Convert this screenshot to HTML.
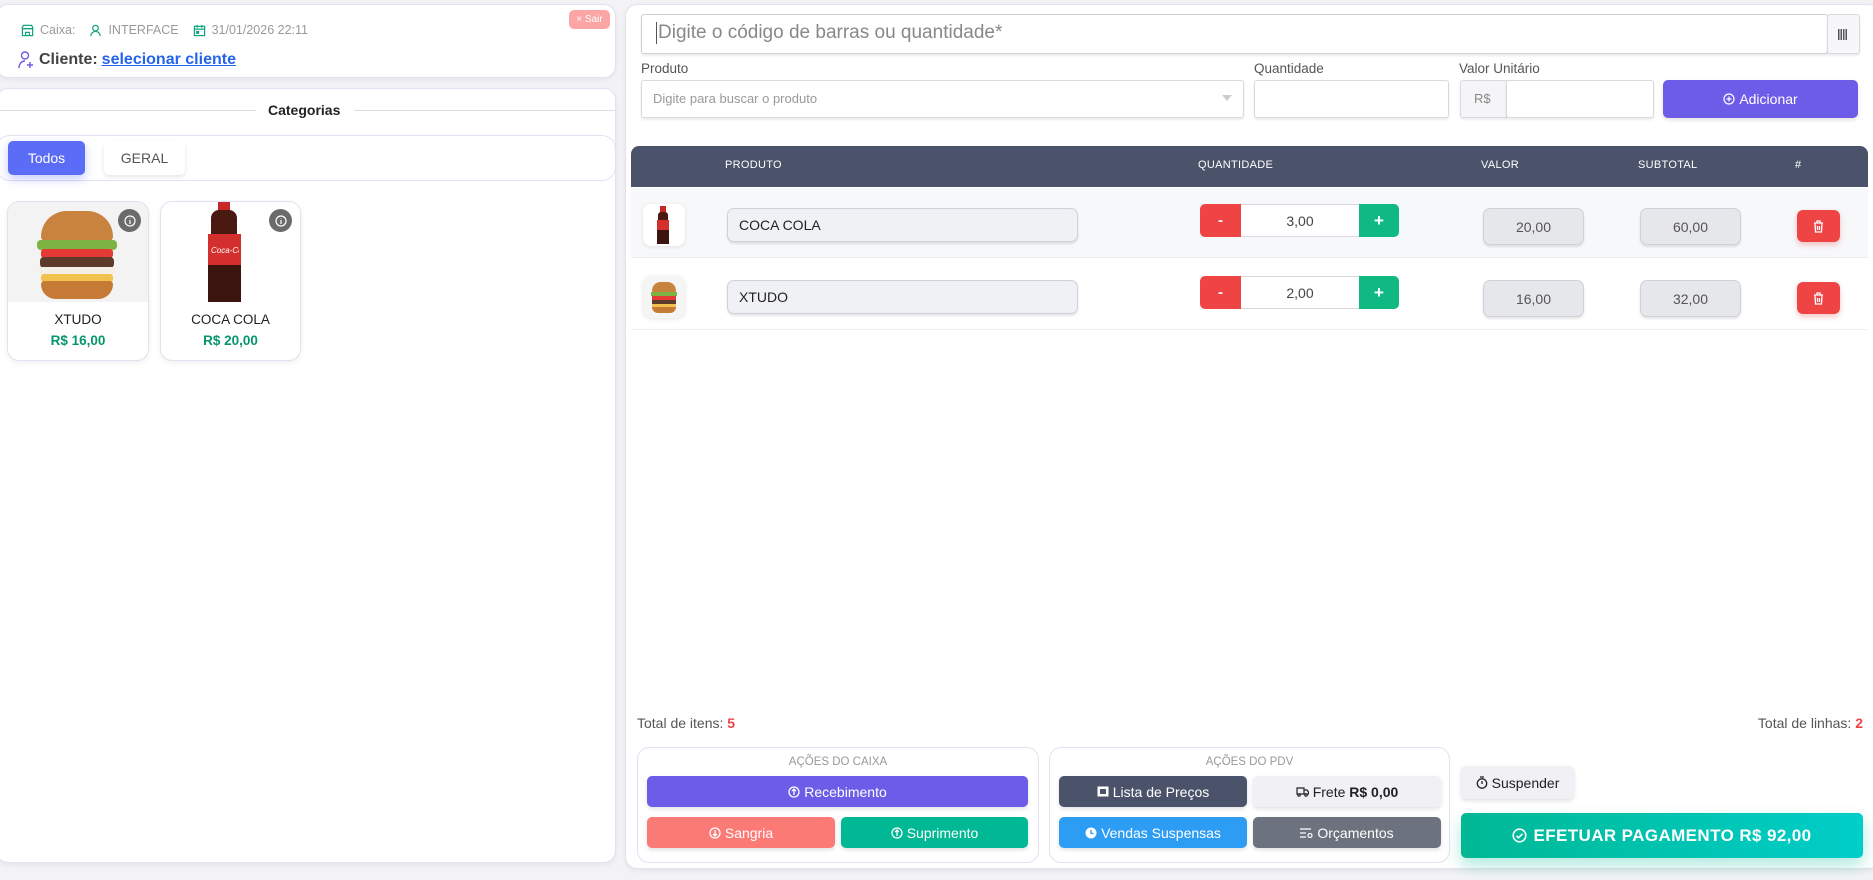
<!DOCTYPE html>
<html><head><meta charset="utf-8">
<style>
*{box-sizing:border-box;margin:0;padding:0}
body{width:1873px;height:880px;background:#f3f3f6;font-family:"Liberation Sans",sans-serif;position:relative;overflow:hidden;color:#333}
.a{position:absolute}
.card{position:absolute;background:#fff;border:1px solid #e2e1ef;border-radius:12px;box-shadow:0 2px 6px rgba(0,0,0,.06)}
.btn{position:absolute;border-radius:5px;display:flex;align-items:center;justify-content:center;font-size:14px;color:#fff;box-shadow:0 2px 4px rgba(0,0,0,.12)}
.inp{position:absolute;background:#fff;border:1px solid #d9d9df;border-radius:3px;box-shadow:0 2px 2px rgba(0,0,0,.08)}
.th{position:absolute;top:159px;font-size:11px;color:#fff;letter-spacing:.3px}
.pf{position:absolute;background:#f0f1f5;border:1px solid #cfd1d8;border-radius:7px;font-size:14px;color:#222;display:flex;align-items:center;padding-left:11px;box-shadow:0 2px 2px rgba(0,0,0,.1)}
.vf{position:absolute;background:#e6e7ea;border:1px solid #cfd1d8;border-radius:7px;font-size:14px;color:#555;display:flex;align-items:center;justify-content:center;box-shadow:0 2px 2px rgba(0,0,0,.1);width:101px;height:37px}
.qm{position:absolute;background:#ef4444;color:#fff;width:41px;height:33px;border-radius:5px 0 0 5px;display:flex;align-items:center;justify-content:center;font-size:15px;font-weight:bold}
.qp{position:absolute;background:#10b981;color:#fff;width:40px;height:33px;border-radius:0 5px 5px 0;display:flex;align-items:center;justify-content:center;font-size:17px;font-weight:bold}
.qv{position:absolute;background:#fff;width:118px;height:33px;border-top:1px solid #d8d8de;border-bottom:1px solid #d8d8de;display:flex;align-items:center;justify-content:center;font-size:14px;color:#444}
.del{position:absolute;background:#ef4444;border-radius:6px;width:43px;height:32px;box-shadow:0 3px 6px rgba(239,68,68,.3);display:flex;align-items:center;justify-content:center}
</style></head><body>

<!-- top-left card -->
<div class="card" style="left:-4px;top:4px;width:620px;height:74px"></div>
<div class="a" style="left:569px;top:10px;width:41px;height:19px;background:#fca5a5;border-radius:5px;color:#fff;font-size:10px;display:flex;align-items:center;justify-content:center">× Sair</div>
<div class="a" style="left:21px;top:23px;font-size:12.5px;color:#999;display:flex;align-items:center;gap:6px;white-space:nowrap">
<svg width="13" height="13" viewBox="0 0 14 14" fill="none" stroke="#10a37f" stroke-width="1.3"><rect x="1.5" y="5" width="11" height="7.5"/><path d="M1 5l1.5-3.5h9L13 5M1 5h12M5 12.5V9h4v3.5"/></svg><span>Caixa:</span>
<svg style="margin-left:8px" width="13" height="13" viewBox="0 0 14 14" fill="none" stroke="#10a37f" stroke-width="1.3"><circle cx="7" cy="4.5" r="3"/><path d="M2 13c0-3 2.5-5 5-5s5 2 5 5"/></svg><span>INTERFACE</span>
<svg style="margin-left:8px" width="13" height="13" viewBox="0 0 14 14" fill="none" stroke="#10a37f" stroke-width="1.3"><rect x="1.5" y="2.5" width="11" height="10"/><path d="M1.5 5.5h11M4.5 1v3M9.5 1v3"/><rect x="4" y="8" width="2" height="2" fill="#10a37f"/></svg><span>31/01/2026 22:11</span></div>
<div class="a" style="left:18px;top:51px;font-size:16px;color:#333;display:flex;align-items:center;gap:4px;white-space:nowrap">
<svg width="17" height="18" viewBox="0 0 17 18" fill="none" stroke="#6b5be6" stroke-width="1.4"><circle cx="7" cy="4.5" r="3.5"/><path d="M1 17c0-4 2.5-7 6-7M12 11v6M9 14h6"/></svg>
<span style="font-weight:bold;color:#444">Cliente:</span><span style="color:#2563eb;text-decoration:underline;font-weight:bold">selecionar cliente</span></div>

<!-- categories card -->
<div class="card" style="left:-4px;top:88px;width:620px;height:775px"></div>
<div class="a" style="left:0;top:110px;width:256px;height:1px;background:#ddd"></div>
<div class="a" style="left:354px;top:110px;width:261px;height:1px;background:#ddd"></div>
<div class="a" style="left:268px;top:102px;font-size:14px;font-weight:bold;color:#222">Categorias</div>
<div class="card" style="left:-4px;top:135px;width:620px;height:46px;border-radius:14px;box-shadow:none"></div>
<div class="a" style="left:8px;top:141px;width:77px;height:34px;background:#5b6cf6;border-radius:5px;color:#fff;font-size:14px;display:flex;align-items:center;justify-content:center;box-shadow:0 4px 10px rgba(91,108,246,.35)">Todos</div>
<div class="a" style="left:104px;top:141px;width:81px;height:34px;background:#fff;border-radius:5px;color:#555;font-size:14px;display:flex;align-items:center;justify-content:center;box-shadow:0 2px 4px rgba(0,0,0,.1)">GERAL</div>

<!-- product cards -->
<div class="card" style="left:7px;top:201px;width:142px;height:160px;overflow:hidden">
 <div style="height:100px;background:#f3f3f3;position:relative">
  <div class="a" style="left:33px;top:9px;width:72px;height:30px;background:#c8843e;border-radius:36px 36px 6px 6px"></div>
  <div class="a" style="left:29px;top:38px;width:80px;height:10px;background:#7cb342;border-radius:4px"></div>
  <div class="a" style="left:33px;top:47px;width:72px;height:9px;background:#e53935;border-radius:3px"></div>
  <div class="a" style="left:32px;top:55px;width:74px;height:11px;background:#5d3a2a;border-radius:4px"></div>
  <div class="a" style="left:31px;top:65px;width:76px;height:8px;background:#f5f0e5;border-radius:3px"></div>
  <div class="a" style="left:33px;top:72px;width:72px;height:8px;background:#f2c14e;border-radius:3px"></div>
  <div class="a" style="left:33px;top:79px;width:72px;height:18px;background:#c57a35;border-radius:4px 4px 18px 18px"></div>
  <div class="a" style="left:110px;top:7px;width:23px;height:23px;border-radius:50%;background:#6b6b6b;display:flex;align-items:center;justify-content:center"><svg width="12" height="12" viewBox="0 0 12 12" fill="none" stroke="#fff" stroke-width="1.2"><circle cx="6" cy="6" r="5"/><path d="M6 5v4M6 3v.5"/></svg></div>
 </div>
 <div style="text-align:center;font-size:13.5px;color:#222;margin-top:10px">XTUDO</div>
 <div style="text-align:center;font-size:13.5px;color:#059669;font-weight:bold;margin-top:6px">R$ 16,00</div>
</div>
<div class="card" style="left:160px;top:201px;width:141px;height:160px;overflow:hidden">
 <div style="height:100px;background:#fff;position:relative">
  <div class="a" style="left:57px;top:0;width:12px;height:10px;background:#c62828"></div>
  <div class="a" style="left:50px;top:8px;width:26px;height:25px;background:#4a1a12;border-radius:8px 8px 0 0"></div>
  <div class="a" style="left:47px;top:32px;width:33px;height:32px;background:#d32f2f"></div>
  <div class="a" style="left:50px;top:44px;font-size:8px;color:#fff;font-style:italic;overflow:hidden;width:28px;white-space:nowrap">Coca-Cola</div>
  <div class="a" style="left:47px;top:63px;width:33px;height:37px;background:#3b1410"></div>
  <div class="a" style="left:108px;top:7px;width:23px;height:23px;border-radius:50%;background:#6b6b6b;display:flex;align-items:center;justify-content:center"><svg width="12" height="12" viewBox="0 0 12 12" fill="none" stroke="#fff" stroke-width="1.2"><circle cx="6" cy="6" r="5"/><path d="M6 5v4M6 3v.5"/></svg></div>
 </div>
 <div style="text-align:center;font-size:13.5px;color:#222;margin-top:10px">COCA COLA</div>
 <div style="text-align:center;font-size:13.5px;color:#059669;font-weight:bold;margin-top:6px">R$ 20,00</div>
</div>

<!-- right panel -->
<div class="card" style="left:625px;top:4px;width:1256px;height:865px"></div>
<div class="inp" style="left:641px;top:14px;width:1187px;height:40px;border-color:#cfcfd6"></div>
<div class="a" style="left:656px;top:22px;width:1px;height:22px;background:#555"></div>
<div class="a" style="left:658px;top:22px;font-size:19px;color:#888">Digite o código de barras ou quantidade*</div>
<div class="inp" style="left:1827px;top:14px;width:33px;height:40px;background:#f7f7f9"></div>
<div class="a" style="left:1838px;top:29px;width:10px;height:11px;background:repeating-linear-gradient(90deg,#555 0 1.5px,transparent 1.5px 2.5px)"></div>

<div class="a" style="left:641px;top:61px;font-size:13.5px;color:#555">Produto</div>
<div class="a" style="left:1254px;top:61px;font-size:13.5px;color:#555">Quantidade</div>
<div class="a" style="left:1459px;top:61px;font-size:13.5px;color:#555">Valor Unitário</div>
<div class="inp" style="left:641px;top:80px;width:603px;height:38px"></div>
<div class="a" style="left:653px;top:91px;font-size:13px;color:#999">Digite para buscar o produto</div>
<div class="a" style="left:1222px;top:95px;border:5px solid transparent;border-top:6px solid #ccc;border-bottom:0;width:0"></div>
<div class="inp" style="left:1254px;top:80px;width:195px;height:38px"></div>
<div class="inp" style="left:1460px;top:80px;width:47px;height:38px;background:#f5f5f7;border-radius:3px 0 0 3px"></div>
<div class="a" style="left:1474px;top:91px;font-size:13px;color:#888">R$</div>
<div class="inp" style="left:1506px;top:80px;width:148px;height:38px"></div>
<div class="btn" style="left:1663px;top:80px;width:195px;height:38px;background:#6c5ce7">
<svg width="12" height="12" viewBox="0 0 12 12" fill="none" stroke="#fff" stroke-width="1.2" style="margin-right:4px"><circle cx="6" cy="6" r="5"/><path d="M6 3.5v5M3.5 6h5"/></svg>Adicionar</div>

<!-- table -->
<div class="a" style="left:631px;top:146px;width:1237px;height:41px;background:#4a5369;border-radius:8px 8px 0 0"></div>
<div class="th" style="left:725px">PRODUTO</div>
<div class="th" style="left:1198px">QUANTIDADE</div>
<div class="th" style="left:1481px">VALOR</div>
<div class="th" style="left:1638px">SUBTOTAL</div>
<div class="th" style="left:1795px">#</div>

<div class="a" style="left:631px;top:188px;width:1237px;height:70px;background:#f7f8fa;border-bottom:1px solid #eceef2"></div>
<div class="a" style="left:631px;top:258px;width:1237px;height:72px;background:#fff;border-bottom:1px solid #eceef2"></div>

<!-- row1 -->
<div class="a" style="left:643px;top:204px;width:42px;height:42px;background:#fff;border-radius:8px;box-shadow:0 1px 4px rgba(0,0,0,.1)">
 <div class="a" style="left:17px;top:2px;width:6px;height:6px;background:#c62828"></div>
 <div class="a" style="left:15px;top:8px;width:10px;height:8px;background:#4a1a12;border-radius:3px 3px 0 0"></div>
 <div class="a" style="left:14px;top:16px;width:12px;height:10px;background:#d32f2f"></div>
 <div class="a" style="left:14px;top:26px;width:12px;height:14px;background:#3b1410"></div>
</div>
<div class="pf" style="left:727px;top:208px;width:351px;height:34px">COCA COLA</div>
<div class="qm" style="left:1200px;top:204px">-</div>
<div class="qv" style="left:1241px;top:204px">3,00</div>
<div class="qp" style="left:1359px;top:204px">+</div>
<div class="vf" style="left:1483px;top:208px">20,00</div>
<div class="vf" style="left:1640px;top:208px">60,00</div>
<div class="del" style="left:1797px;top:210px"><svg width="11" height="13" viewBox="0 0 11 13" fill="none" stroke="#fff" stroke-width="1.3"><path d="M1 3h9M4 3V1h3v2M2 3l.5 9h6L9 3M4.5 6v4M6.5 6v4"/></svg></div>

<!-- row2 -->
<div class="a" style="left:643px;top:276px;width:42px;height:42px;background:#f5f5f5;border-radius:8px;box-shadow:0 1px 4px rgba(0,0,0,.1)">
 <div class="a" style="left:9px;top:6px;width:24px;height:10px;background:#c8843e;border-radius:12px 12px 2px 2px"></div>
 <div class="a" style="left:8px;top:16px;width:26px;height:4px;background:#7cb342"></div>
 <div class="a" style="left:9px;top:20px;width:24px;height:4px;background:#e53935"></div>
 <div class="a" style="left:9px;top:24px;width:24px;height:4px;background:#5d3a2a"></div>
 <div class="a" style="left:9px;top:28px;width:24px;height:3px;background:#f2c14e"></div>
 <div class="a" style="left:9px;top:31px;width:24px;height:6px;background:#c57a35;border-radius:0 0 6px 6px"></div>
</div>
<div class="pf" style="left:727px;top:280px;width:351px;height:34px">XTUDO</div>
<div class="qm" style="left:1200px;top:276px">-</div>
<div class="qv" style="left:1241px;top:276px">2,00</div>
<div class="qp" style="left:1359px;top:276px">+</div>
<div class="vf" style="left:1483px;top:280px">16,00</div>
<div class="vf" style="left:1640px;top:280px">32,00</div>
<div class="del" style="left:1797px;top:282px"><svg width="11" height="13" viewBox="0 0 11 13" fill="none" stroke="#fff" stroke-width="1.3"><path d="M1 3h9M4 3V1h3v2M2 3l.5 9h6L9 3M4.5 6v4M6.5 6v4"/></svg></div>

<!-- totals -->
<div class="a" style="left:637px;top:715px;font-size:14px;color:#555">Total de itens: <b style="color:#ef4444">5</b></div>
<div class="a" style="left:1700px;top:715px;width:163px;text-align:right;font-size:14px;color:#555">Total de linhas: <b style="color:#ef4444">2</b></div>

<!-- actions caixa -->
<div class="card" style="left:637px;top:747px;width:402px;height:116px;box-shadow:none"></div>
<div class="a" style="left:637px;top:756px;width:402px;text-align:center;font-size:11.5px;color:#999">AÇÕES DO CAIXA</div>
<div class="btn" style="left:647px;top:776px;width:381px;height:31px;background:#6c5ce7">
<svg width="12" height="12" viewBox="0 0 12 12" fill="none" stroke="#fff" stroke-width="1.3" style="margin-right:4px"><circle cx="6" cy="6" r="5"/><path d="M6 3v6M4 5l2-2 2 2"/></svg>Recebimento</div>
<div class="btn" style="left:647px;top:817px;width:188px;height:31px;background:#fc7a76">
<svg width="12" height="12" viewBox="0 0 12 12" fill="none" stroke="#fff" stroke-width="1.3" style="margin-right:4px"><circle cx="6" cy="6" r="5"/><path d="M6 3v6M4 7l2 2 2-2"/></svg>Sangria</div>
<div class="btn" style="left:841px;top:817px;width:187px;height:31px;background:#00b894">
<svg width="12" height="12" viewBox="0 0 12 12" fill="none" stroke="#fff" stroke-width="1.3" style="margin-right:4px"><circle cx="6" cy="6" r="5"/><path d="M6 3v6M4 5l2-2 2 2"/></svg>Suprimento</div>

<!-- actions pdv -->
<div class="card" style="left:1049px;top:747px;width:401px;height:116px;box-shadow:none"></div>
<div class="a" style="left:1049px;top:756px;width:401px;text-align:center;font-size:11.5px;color:#999">AÇÕES DO PDV</div>
<div class="btn" style="left:1059px;top:776px;width:188px;height:31px;background:#4a5369">
<svg width="12" height="11" viewBox="0 0 12 11" style="margin-right:4px"><rect x="0.5" y="0.5" width="11" height="10" fill="#fff"/><rect x="3" y="3" width="6" height="5" fill="#4a5369"/></svg>Lista de Preços</div>
<div class="btn" style="left:1253px;top:776px;width:188px;height:31px;background:#f0f0f5;color:#222">
<svg width="13" height="11" viewBox="0 0 13 11" fill="none" stroke="#222" stroke-width="1.2" style="margin-right:4px"><path d="M1 2h7v6H1zM8 4h3l1.5 2v2H8"/><circle cx="3" cy="9" r="1.2"/><circle cx="10" cy="9" r="1.2"/></svg>Frete&nbsp;<b>R$ 0,00</b></div>
<div class="btn" style="left:1059px;top:817px;width:188px;height:31px;background:#2d9cf3">
<svg width="12" height="12" viewBox="0 0 12 12" style="margin-right:4px"><circle cx="6" cy="6" r="5.5" fill="#fff"/><path d="M6 3v3.5h2.5" stroke="#2d9cf3" stroke-width="1.3" fill="none"/></svg>Vendas Suspensas</div>
<div class="btn" style="left:1253px;top:817px;width:188px;height:31px;background:#6c737e">
<svg width="13" height="10" viewBox="0 0 13 10" fill="none" stroke="#fff" stroke-width="1.2" style="margin-right:4px"><path d="M0 1h11M0 5h6M0 9h6"/><circle cx="10" cy="7.5" r="2"/></svg>Orçamentos</div>

<!-- right side buttons -->
<div class="btn" style="left:1461px;top:766px;width:113px;height:33px;background:#f0f0f5;color:#222;font-size:14px">
<svg width="12" height="13" viewBox="0 0 12 13" fill="none" stroke="#222" stroke-width="1.3" style="margin-right:4px"><circle cx="6" cy="7.5" r="4.7"/><path d="M4 1h4M6 5v3"/></svg>Suspender</div>
<div class="btn" style="left:1461px;top:813px;width:402px;height:45px;background:linear-gradient(90deg,#00b894,#00cec9);font-size:17px;font-weight:bold;letter-spacing:.4px;box-shadow:0 8px 16px rgba(0,184,148,.3)">
<svg width="15" height="15" viewBox="0 0 15 15" fill="none" stroke="#fff" stroke-width="1.6" style="margin-right:6px"><circle cx="7.5" cy="7.5" r="6.3"/><path d="M4.5 7.8l2 2 4-4"/></svg>EFETUAR PAGAMENTO R$ 92,00</div>

</body></html>
